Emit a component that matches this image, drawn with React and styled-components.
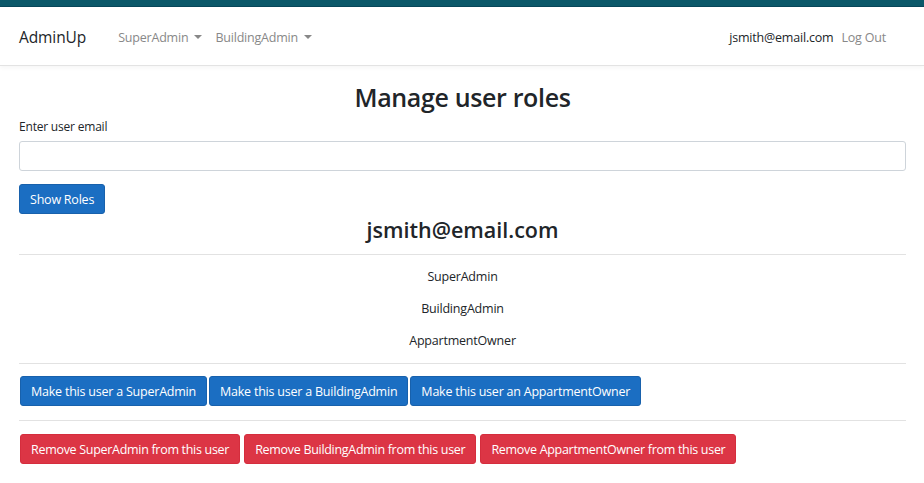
import React, { useState } from "react";
import styled, { createGlobalStyle } from "styled-components";

const GlobalStyle = createGlobalStyle`
  html, body {
    margin: 0;
    padding: 0;
    background: #fff;
    font-family: "Open Sans", "Noto Sans", sans-serif;
    color: #212529;
  }
  * { box-sizing: border-box; }
`;

const TopStrip = styled.div`
  height: 7px;
  background: #0b5869;
  border-bottom: 1px solid #08475a;
`;

const Navbar = styled.nav`
  height: 59px;
  display: flex;
  align-items: center;
  padding: 2px 19px 0;
  border-bottom: 1px solid #e3e3e3;
  box-shadow: 0 2px 4px rgba(0, 0, 0, 0.04);
`;

const Brand = styled.a`
  font-size: 15.5px;
  color: #212529;
  margin-right: 32px;
  letter-spacing: -0.1px;
`;

const NavLink = styled.a`
  font-size: 12.5px;
  color: ${(p) => (p.$dark ? "#212529" : "#888")};
  margin-right: ${(p) => p.$gap || 13}px;
  display: flex;
  align-items: center;
  letter-spacing: -0.2px;
  cursor: pointer;
`;

const Caret = styled.span`
  display: inline-block;
  margin-left: 6px;
  border-top: 4px solid #888;
  border-left: 4px solid transparent;
  border-right: 4px solid transparent;
`;

const Spacer = styled.div`
  flex: 1;
`;

const Main = styled.main`
  padding: 0 18px 0 19px;
`;

const Title = styled.h1`
  margin: 16px 0 0;
  font-size: 25px;
  font-weight: 600;
  text-align: center;
  line-height: 30px;
  letter-spacing: -0.35px;
`;

const Label = styled.label`
  display: block;
  margin-top: 7px;
  font-size: 12px;
  line-height: 16px;
  letter-spacing: -0.2px;
`;

const Input = styled.input`
  display: block;
  width: 100%;
  height: 30px;
  margin-top: 6px;
  border: 1px solid #ced4da;
  border-radius: 3px;
  font: inherit;
  font-size: 13px;
  padding: 0 8px;
  outline: none;
`;

const Button = styled.button`
  height: 30px;
  padding: 0 10px;
  border: 1px solid ${(p) => (p.$danger ? "#d52d3d" : "#1861ac")};
  background: ${(p) => (p.$danger ? "#dc3545" : "#1b6ec2")};
  color: #fff;
  border-radius: 3px;
  font-family: inherit;
  font-size: 12.5px;
  letter-spacing: ${(p) => (p.$danger ? -0.3 : -0.22)}px;
  cursor: pointer;
`;

const ShowButton = styled(Button)`
  margin-top: 13px;
`;

const UserHeading = styled.h2`
  margin: 4px 0 0;
  text-align: center;
  font-size: 21.5px;
  font-weight: 600;
  line-height: 24px;
  letter-spacing: 0;
`;

const Rule = styled.hr`
  margin: ${(p) => p.$top || 0}px 0 0;
  border: 0;
  border-top: 1px solid #e2e2e2;
`;

const RoleList = styled.div`
  display: flex;
  flex-direction: column;
  align-items: center;
  gap: 12px;
  padding: 12px 0 12px;
`;

const Role = styled.div`
  font-size: 12.5px;
  line-height: 20px;
  letter-spacing: -0.2px;
`;

const ButtonRow = styled.div`
  display: flex;
  gap: ${(p) => p.$gap || 2}px;
  margin-top: ${(p) => p.$top || 12}px;
  padding-left: 1px;
`;

const navLinks = ["SuperAdmin", "BuildingAdmin"];
const roles = ["SuperAdmin", "BuildingAdmin", "AppartmentOwner"];

export default function App() {
  const [email, setEmail] = useState("");

  return (
    <>
      <GlobalStyle />
      <TopStrip />
      <Navbar>
        <Brand>AdminUp</Brand>
        {navLinks.map((l) => (
          <NavLink key={l}>
            {l}
            <Caret />
          </NavLink>
        ))}
        <Spacer />
        <NavLink $dark $gap={8}>jsmith@email.com</NavLink>
        <NavLink $gap={19}>Log Out</NavLink>
      </Navbar>
      <Main>
        <Title>Manage user roles</Title>
        <Label htmlFor="email">Enter user email</Label>
        <Input id="email" value={email} onChange={(e) => setEmail(e.target.value)} />
        <ShowButton>Show Roles</ShowButton>
        <UserHeading>jsmith@email.com</UserHeading>
        <Rule $top={12} />
        <RoleList>
          {roles.map((r) => (
            <Role key={r}>{r}</Role>
          ))}
        </RoleList>
        <Rule />
        <ButtonRow>
          <Button>Make this user a SuperAdmin</Button>
          <Button>Make this user a BuildingAdmin</Button>
          <Button>Make this user an AppartmentOwner</Button>
        </ButtonRow>
        <Rule $top={14} />
        <ButtonRow $gap={4} $top={13}>
          {roles.map((r) => (
            <Button key={r} $danger>
              Remove {r} from this user
            </Button>
          ))}
        </ButtonRow>
      </Main>
    </>
  );
}
